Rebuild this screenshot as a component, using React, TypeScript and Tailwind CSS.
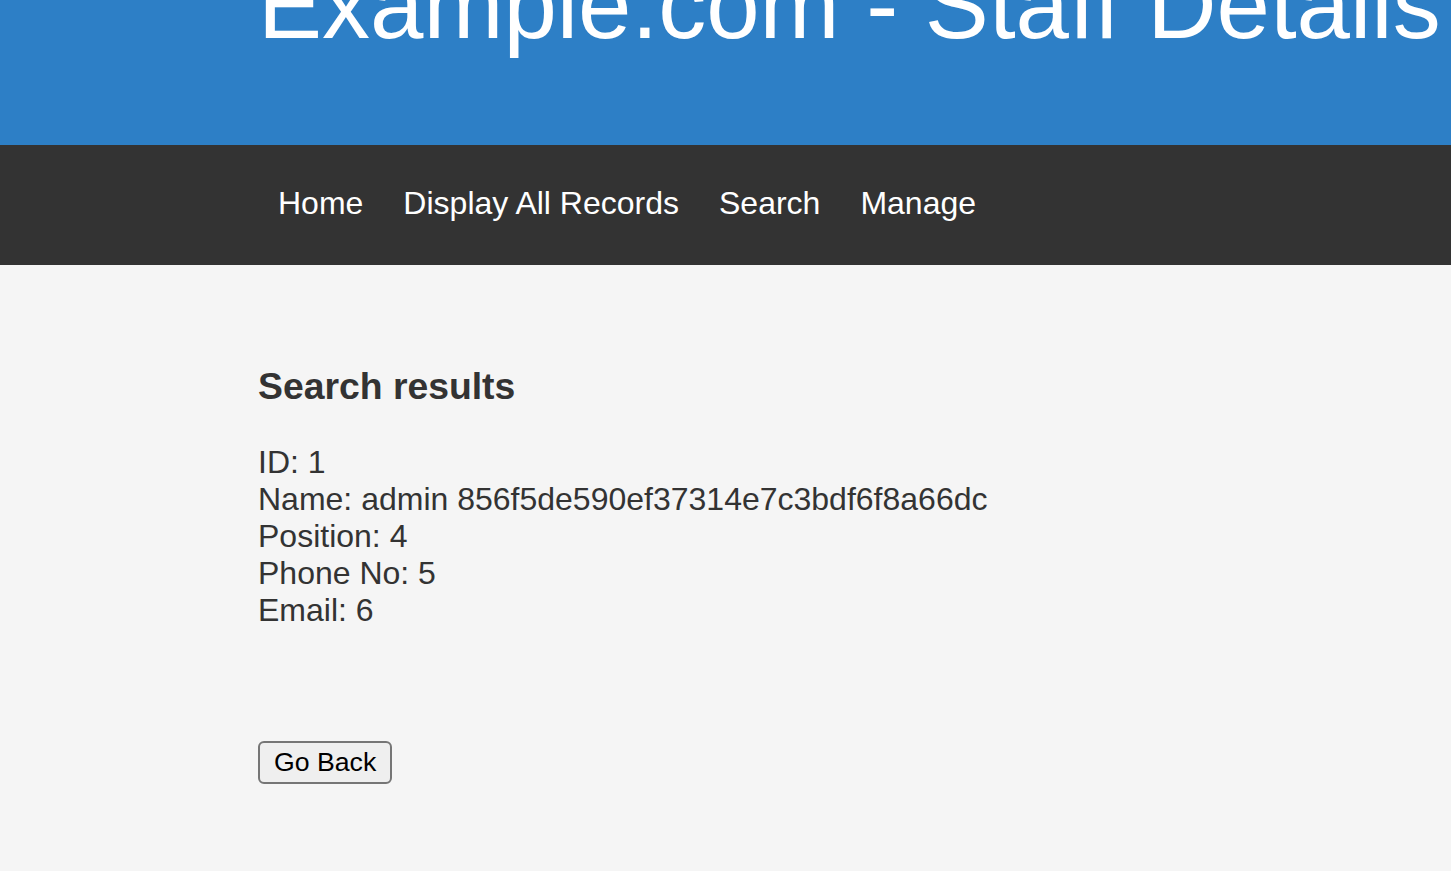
import React from 'react';

const links = ['Home', 'Display All Records', 'Search', 'Manage'];

const record = [
    { label: 'ID', value: '1' },
    { label: 'Name', value: 'admin 856f5de590ef37314e7c3bdf6f8a66dc' },
    { label: 'Position', value: '4' },
    { label: 'Phone No', value: '5' },
    { label: 'Email', value: '6' },
];

export default function App() {
    return (
        <div className="min-h-screen bg-[#f5f5f5] font-['Liberation_Sans',Arial,sans-serif] text-[#333]">
            <header className="h-[145px] overflow-hidden bg-[#2d7fc6]">
                <h1 className="-mt-[50px] pl-[258px] text-[96px] font-normal leading-[1.15] whitespace-nowrap text-white">
                    Example.com - Staff Details
                </h1>
            </header>

            <nav className="flex h-[120px] items-center bg-[#333] pb-[4px] pl-[258px]">
                {links.map((link) => (
                    <a key={link} href="#" className="px-5 text-[32px] leading-[1.15] text-white">
                        {link}
                    </a>
                ))}
            </nav>

            <main className="pl-[258px] pt-[100px] pb-20">
                <h3 className="mb-[36px] text-[37.33px] font-bold leading-[1.15]">Search results</h3>
                <div className="text-[32px] leading-[37px]">
                    {record.map((r) => (
                        <div key={r.label}>
                            {r.label}: {r.value}
                        </div>
                    ))}
                </div>
                <button
                    type="button"
                    className="mt-[112px] rounded-[6px] border-2 border-[#767676] bg-[#efefef] px-[14px] py-[4px] text-[26.67px] leading-[1.15] text-black"
                >
                    Go Back
                </button>
            </main>
        </div>
    );
}
